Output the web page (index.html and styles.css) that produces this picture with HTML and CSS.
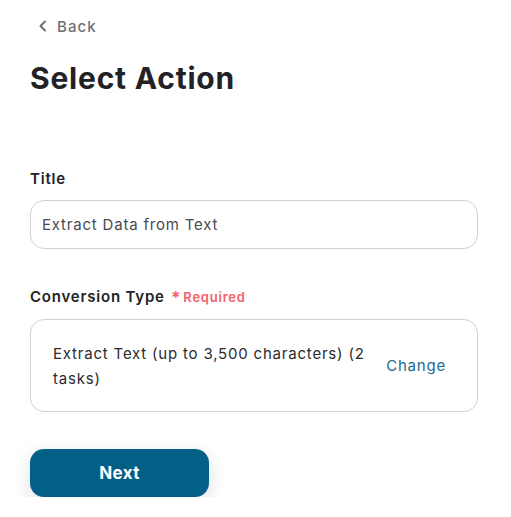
FILE: index.html
```html
<!DOCTYPE html>
<html>
<head>
<meta charset="utf-8">
<link rel="stylesheet" href="styles.css">
</head>
<body>
<div class="page">
  <a class="back" href="#">
    <svg class="chev" width="10" height="12" viewBox="0 0 10 12"><path d="M7 1.5 L2.5 6 L7 10.5" fill="none" stroke="#6f6f73" stroke-width="2" stroke-linecap="round" stroke-linejoin="round"/></svg>
    <span>Back</span>
  </a>
  <h1 class="heading">Select Action</h1>

  <div class="field field-title">
    <label class="label">Title</label>
    <div class="input">Extract Data from Text</div>
  </div>

  <div class="field field-type">
    <label class="label">Conversion Type <span class="req"><span class="star">*</span>Required</span></label>
    <div class="select-box">
      <div class="select-text">Extract Text (up to 3,500 characters) (2 tasks)</div>
      <a class="change" href="#">Change</a>
    </div>
  </div>

  <button class="next">Next</button>
</div>
</body>
</html>
```

FILE: styles.css
```css
* { box-sizing: border-box; }
html, body { margin: 0; padding: 0; background: #ffffff; }
body { font-family: Inter, "Noto Sans", sans-serif; color: #222226; letter-spacing: 0.05em; }
.page { padding: 16px 33px 0 30px; width: 511px; }
.back { display: flex; align-items: center; gap: 9px; text-decoration: none; color: #6f6f73; font-size: 15px; font-weight: 500; height: 20px; padding-left: 8px; letter-spacing: 0.07em; }
.chev { display: block; }
.heading { margin: 24px 0 0 0; font-size: 30px; font-weight: 700; line-height: 36px; color: #222226; letter-spacing: 0.026em; }
.field-title { margin-top: 73px; }
.label { display: block; font-size: 15px; font-weight: 600; line-height: 20px; color: #222226; }
.input { margin-top: 11px; height: 49px; border: 1px solid #cfd2dc; border-radius: 14px; padding: 0 11px; display: flex; align-items: center; font-size: 15px; color: #4a4a50; }
.field-type { margin-top: 38px; }
.req { font-size: 13px; font-weight: 600; color: #f5606a; margin-left: 2px; letter-spacing: 0.06em; }
.star { font-size: 17px; vertical-align: -2px; margin-right: 2px; }
.select-box { margin-top: 11px; height: 93px; border: 1px solid #cfd2dc; border-radius: 14px; padding: 0 31px 0 22px; display: flex; align-items: center; justify-content: space-between; }
.select-text { font-size: 15px; line-height: 25px; color: #2a2a2e; width: 318px; }
.change { color: #1d6a8c; font-size: 15px; text-decoration: none; }
.next { margin-top: 37px; width: 179px; height: 48px; border: none; border-radius: 14px; background: #045f86; color: #ffffff; font-family: Inter, "Noto Sans", sans-serif; font-size: 17px; font-weight: 700; letter-spacing: 0.02em; box-shadow: 0 6px 18px rgba(40, 50, 90, 0.16); }
```
